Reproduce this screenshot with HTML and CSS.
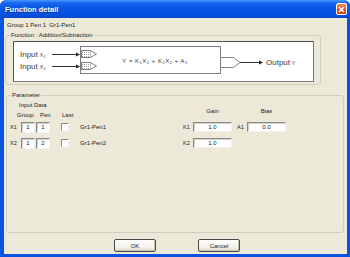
FILE: index.html
```html
<!DOCTYPE html>
<html lang="en">
  <head>
    <meta charset="UTF-8" />
    <title>Function detail</title>
    <link rel="stylesheet" href="styles.css">
  </head>
  <body>
    <div class="window">
      <div class="titlebar">
        <span class="title">Function detail</span>
        <span class="close">
          <svg width="7" height="7" viewBox="0 0 7 7"><path d="M1 1L6 6M6 1L1 6" stroke="#fff" stroke-width="1.5"/></svg>
        </span>
      </div>
      <div class="client">
        <div class="caption">Group 1 Pen 1&nbsp;&nbsp;Gr1-Pen1</div>

        <fieldset class="group func">
          <legend>Function : Addition/Subtraction</legend>
          <div class="diagram">
            <svg class="flow" width="299" height="39" viewBox="0 0 299 39">
              <defs>
                <pattern id="dots" width="2" height="2" patternUnits="userSpaceOnUse">
                  <rect width="2" height="2" fill="#fff"/>
                  <rect width="1" height="1" fill="#a0a0a0"/>
                </pattern>
              </defs>
              <!-- inputs -->
              <text class="port" x="6" y="14.5"><tspan class="word">Input</tspan> <tspan class="var">X</tspan><tspan class="sub" dy="1">1</tspan></text>
              <text class="port" x="6" y="26.5"><tspan class="word">Input</tspan> <tspan class="var">X</tspan><tspan class="sub" dy="1">2</tspan></text>
              <line class="wire" x1="38" y1="12.5" x2="64" y2="12.5"/>
              <polygon class="head" points="62,10.5 66,12.5 62,14.5"/>
              <line class="wire" x1="38" y1="24.5" x2="64" y2="24.5"/>
              <polygon class="head" points="62,22.5 66,24.5 62,26.5"/>
              <!-- block -->
              <rect class="block" x="66.5" y="4.5" width="140" height="27"/>
              <rect class="gate" x="67.5" y="8.5" width="9" height="7"/>
              <polyline class="tip" points="76.5,8.5 82.5,12 76.5,15.5"/>
              <rect class="gate" x="67.5" y="20.5" width="9" height="7"/>
              <polyline class="tip" points="76.5,20.5 82.5,24 76.5,27.5"/>
              <text class="formula" x="141" y="21">Y = K<tspan class="fsub" dy="1">1</tspan><tspan dy="-1">X</tspan><tspan class="fsub" dy="1">1</tspan><tspan dy="-1"> + K</tspan><tspan class="fsub" dy="1">2</tspan><tspan dy="-1">X</tspan><tspan class="fsub" dy="1">2</tspan><tspan dy="-1"> + A</tspan><tspan class="fsub" dy="1">1</tspan></text>
              <!-- output -->
              <polygon class="out" points="206.5,15.5 219.5,15.5 226,20.5 219.5,25.5 206.5,25.5"/>
              <line class="wire" x1="226" y1="20.5" x2="247" y2="20.5"/>
              <polygon class="head" points="245,18.5 249,20.5 245,22.5"/>
              <text class="port" x="252" y="23"><tspan class="word">Output</tspan> <tspan class="var">Y</tspan></text>
            </svg>
          </div>
        </fieldset>

        <fieldset class="group param">
          <legend>Parameter</legend>
          <div class="param-body">
            <div class="inputs">
              <div class="input-data">Input Data</div>
              <div class="heads">
                <span class="h-group">Group</span>
                <span class="h-pen">Pen</span>
                <span>Last</span>
              </div>
              <div class="row">
                <span class="xlabel">X1</span>
                <input class="num" value="1">
                <input class="num" value="1">
                <input type="checkbox" class="check">
                <span class="pen-name">Gr1-Pen1</span>
              </div>
              <div class="row">
                <span class="xlabel">X2</span>
                <input class="num" value="1">
                <input class="num" value="2">
                <input type="checkbox" class="check">
                <span class="pen-name">Gr1-Pen2</span>
              </div>
            </div>
            <div class="coefs">
              <div class="coef-heads">
                <span class="col-head first">Gain</span>
                <span class="col-head">Bias</span>
              </div>
              <div class="row">
                <span class="klabel">K1</span>
                <input class="val" value="1.0">
                <span class="klabel alabel">A1</span>
                <input class="val" value="0.0">
              </div>
              <div class="row">
                <span class="klabel">K2</span>
                <input class="val" value="1.0">
              </div>
            </div>
          </div>
        </fieldset>

        <div class="buttons">
          <button class="btn">OK</button>
          <button class="btn">Cancel</button>
        </div>
      </div>
    </div>
  </body>
</html>
```

FILE: styles.css
```css
/* --------------------
   dialog frame
-------------------- */
* {
  box-sizing: border-box;
}

html, body {
  margin: 0;
  padding: 0;
}

body {
  width: 350px;
  height: 257px;
  overflow: hidden;
  background: #fff;
  font-family: "Liberation Sans", Arial, sans-serif;
  font-size: 6px;
  color: #222;
}

.window {
  width: 350px;
  height: 257px;
  display: flex;
  flex-direction: column;
  background: #0a52e0;
  border-radius: 6px 6px 0 0;
}

.titlebar {
  height: 18px;
  display: flex;
  align-items: center;
  justify-content: space-between;
  padding: 0 3px 0 5px;
  border-radius: 6px 6px 0 0;
  background: linear-gradient(#4a98ff 0, #1766ee 3px, #0758e6 8px, #0553e0 14px, #0348cc 18px);
}

.title {
  color: #fff;
  font-weight: bold;
  font-size: 7.5px;
  text-shadow: 1px 1px 0 #0b3290;
}

.close {
  width: 11px;
  height: 12px;
  display: flex;
  align-items: center;
  justify-content: center;
  border: 1px solid #fff;
  border-radius: 2px;
  background: linear-gradient(#f08a62, #de4b22 60%, #c8381a);
}

.client {
  flex: 1;
  margin: 0 3px 3px 4px;
  background: #ece9d8;
  display: flex;
  flex-direction: column;
}

.caption {
  margin: 3px 0 0 3px;
  line-height: 8px;
}

/* --------------------
   group boxes
-------------------- */
.group {
  margin: 0;
  padding: 0;
  border: 1px solid #d0d0bf;
  border-radius: 3px;
  min-inline-size: 0;
}

.group legend {
  padding: 0 1px;
  line-height: 8px;
  font-size: 6px;
}

.func {
  margin: 2px 0 0 1px;
  width: 316px;
  padding: 2px 6px 2px 7px;
}

.func legend {
  margin-left: -3px;
}

.diagram {
  width: 301px;
  height: 41px;
  background: #fff;
  border: 1px solid #7a7a7a;
  border-top-color: #555;
  border-left-color: #555;
}

.flow {
  display: block;
}

.flow text {
  fill: #333333;
}

.flow .port {
  font-size: 6px;
}

.flow .word {
  font-size: 8px;
  fill: #3a3a3a;
}

.flow .var {
  fill: #555;
}

.flow .sub {
  font-size: 4px;
  fill: #555;
}

.flow .formula {
  font-size: 6px;
  text-anchor: middle;
  letter-spacing: 0.5px;
}

.flow .fsub {
  font-size: 4px;
}

.flow .wire {
  stroke: #333;
  stroke-width: 1;
}

.flow .head {
  fill: #222;
}

.flow .block {
  fill: none;
  stroke: #7d7d7d;
}

.flow .gate {
  fill: url(#dots);
  stroke: #808080;
}

.flow .tip {
  fill: #fff;
  stroke: #808080;
}

.flow .out {
  fill: #fff;
  stroke: #808080;
}

/* --------------------
   parameters
-------------------- */
.param {
  margin: 6px 0 0 2px;
  width: 338px;
  height: 142px;
  padding: 0 0 0 3px;
}

.param legend {
  margin-left: 1px;
}

.param-body {
  display: flex;
}

.inputs {
  width: 173px;
}

.input-data {
  margin: 2px 0 0 9px;
  line-height: 8px;
}

.heads {
  display: flex;
  margin-top: 2px;
  padding-left: 7px;
  line-height: 8px;
}

.h-group {
  width: 23px;
}

.h-pen {
  width: 22px;
}

.row {
  display: flex;
  align-items: center;
  height: 16px;
}

.xlabel {
  width: 11px;
  font-size: 5.5px;
  padding-bottom: 1px;
}

input.num,
input.val {
  height: 11px;
  margin: 0;
  padding: 0;
  font-family: inherit;
  font-size: 6px;
  color: #222;
  text-align: center;
  background: #fff;
  border: 1px solid;
  border-color: #8a8a8a #f2f2f2 #f2f2f2 #8a8a8a;
  box-shadow: inset 1px 1px 0 #d4d0c8;
  outline: none;
}

input.num {
  width: 14px;
  margin-right: 1px;
}

input.check {
  appearance: none;
  width: 8px;
  height: 8px;
  margin: 0 0 0 10px;
  background: #fff;
  border: 1px solid;
  border-color: #8a8a8a #f2f2f2 #f2f2f2 #8a8a8a;
}

.pen-name {
  margin-left: 11px;
}

.coefs {
  width: 120px;
}

.coef-heads {
  display: flex;
  margin-top: 8px;
  line-height: 8px;
  margin-bottom: 4px;
}

.col-head {
  width: 39px;
  text-align: center;
}

.col-head.first {
  margin-left: 10px;
  margin-right: 15px;
}

.klabel {
  width: 10px;
  font-size: 5.5px;
}

.alabel {
  margin-left: 5px;
}

input.val {
  width: 39px;
  height: 10px;
}

/* --------------------
   buttons
-------------------- */
.buttons {
  display: flex;
  gap: 42px;
  margin: 6px 0 0 110px;
}

.btn {
  width: 42px;
  height: 13px;
  padding: 0;
  font-family: inherit;
  font-size: 6px;
  color: #222;
  border: 1px solid #4a4a4a;
  border-radius: 2px;
  background: linear-gradient(#fdfdfb, #f2f1ea 70%, #dcd9cc);
  box-shadow: inset -1px -1px 0 #c9c6b8;
}
```
